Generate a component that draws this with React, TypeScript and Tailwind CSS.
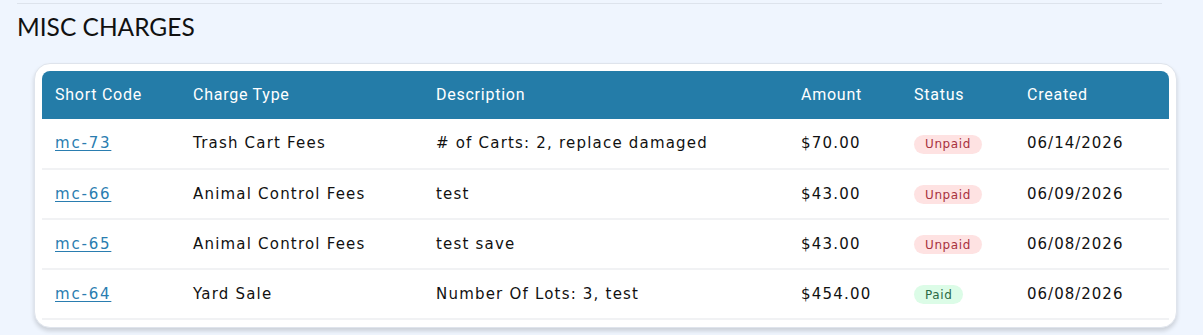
import React from 'react';

type Charge = {
  code: string;
  type: string;
  desc: string;
  amount: string;
  paid: boolean;
  created: string;
};

const rows: Charge[] = [
  { code: 'mc-73', type: 'Trash Cart Fees', desc: '# of Carts: 2, replace damaged', amount: '$70.00', paid: false, created: '06/14/2026' },
  { code: 'mc-66', type: 'Animal Control Fees', desc: 'test', amount: '$43.00', paid: false, created: '06/09/2026' },
  { code: 'mc-65', type: 'Animal Control Fees', desc: 'test save', amount: '$43.00', paid: false, created: '06/08/2026' },
  { code: 'mc-64', type: 'Yard Sale', desc: 'Number Of Lots: 3, test', amount: '$454.00', paid: true, created: '06/08/2026' },
];

const StatusBadge = ({ paid }: { paid: boolean }) =>
  paid ? (
    <span className="inline-flex h-[19px] items-center rounded-full bg-[#dcfce7] px-[11px] text-[12px] tracking-[0.6px] text-[#2b6a45]">Paid</span>
  ) : (
    <span className="inline-flex h-[19px] items-center rounded-full bg-[#fee2e2] px-[11px] text-[12px] tracking-[0.6px] text-[#a8323e]">Unpaid</span>
  );

export default function App() {
  return (
    <div className="min-h-[335px] w-full bg-[#eff5fe] pt-[3px]" style={{ fontFamily: '"DejaVu Sans", sans-serif' }}>
      <div className="ml-[17px] w-[1145px] border-t border-[#dde3ec]" />

      <h1 className="ml-[17px] mt-[8px] text-[24.5px] leading-[30px] text-[#111]" style={{ fontFamily: 'Lato, sans-serif' }}>
        MISC CHARGES
      </h1>

      <div className="ml-[34px] mr-[26px] mt-[21px] rounded-2xl border border-[#dfe4ec] bg-white p-[7px] shadow-[0_3px_4px_rgba(0,0,0,0.15)]">
        <table className="w-full border-collapse text-left">
          <thead>
            <tr className="h-[48px] bg-[#247ca8] text-[16px] tracking-[0.75px] text-white" style={{ fontFamily: 'Roboto, sans-serif' }}>
              <th className="w-[138px] rounded-tl-lg pl-[13px] font-normal">Short Code</th>
              <th className="w-[243px] pl-[13px] font-normal">Charge Type</th>
              <th className="w-[365px] pl-[13px] font-normal">Description</th>
              <th className="w-[113px] pl-[13px] font-normal">Amount</th>
              <th className="w-[113px] pl-[13px] font-normal">Status</th>
              <th className="rounded-tr-lg pl-[13px] font-normal">Created</th>
            </tr>
          </thead>
          <tbody className="text-[15px] tracking-[1.2px] text-[#111]">
            {rows.map((r) => (
              <tr key={r.code} className="h-[50px] border-b-2 border-[#f1f2f4]">
                <td className="pl-[13px]">
                  <a href="#" className="tracking-[1.8px] text-[#2a7db0] underline underline-offset-2">{r.code}</a>
                </td>
                <td className="pl-[13px]">{r.type}</td>
                <td className="pl-[13px]">{r.desc}</td>
                <td className="pl-[13px]">{r.amount}</td>
                <td className="pl-[13px]"><StatusBadge paid={r.paid} /></td>
                <td className="pl-[13px] tracking-[1px]">{r.created}</td>
              </tr>
            ))}
          </tbody>
        </table>
      </div>
    </div>
  );
}
